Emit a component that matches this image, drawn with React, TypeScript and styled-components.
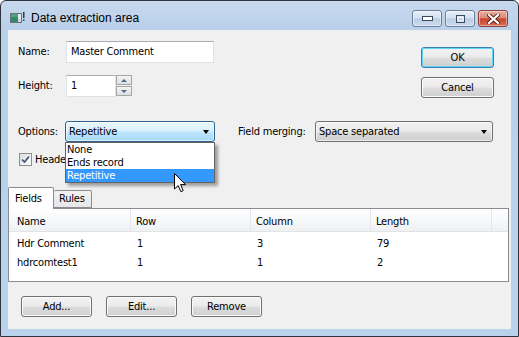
import React from 'react';
import styled, { createGlobalStyle } from 'styled-components';

const UI = `"DejaVu Sans Condensed", "Liberation Sans", sans-serif`;

const Global = createGlobalStyle`
  html, body { margin: 0; padding: 0; background: #ffffff; }
  body { font-family: ${UI}; font-size: 11px; color: #000; letter-spacing: -0.2px; }
  * { box-sizing: border-box; }
`;

const Window = styled.div`
  position: relative;
  width: 519px;
  height: 337px;
  border: 1px solid #2e3340;
  border-radius: 6px 6px 0 0;
  background: linear-gradient(#c6d8ee 0px, #b9d0ea 30px, #bad2ec 100%);
  padding: 0 7px 7px 7px;
  display: flex;
  flex-direction: column;
  overflow: hidden;
`;

const TitleBar = styled.div`
  height: 29px;
  display: flex;
  align-items: flex-start;
  padding: 0 3px 0 2px;
`;

const TitleIcon = styled.svg`
  margin-top: 11px;
  width: 15px;
  height: 11px;
  flex: none;
`;

const TitleText = styled.div`
  margin: 9px 0 0 6px;
  font-family: "Liberation Sans", "Noto Sans", sans-serif;
  font-size: 12px;
  letter-spacing: 0;
  line-height: 16px;
  color: #000;
  flex: 1;
`;

const CapGroup = styled.div`
  display: flex;
  gap: 3px;
  margin-top: 9px;
`;

const CapButton = styled.div<{ $close?: boolean }>`
  width: 30px;
  height: 17px;
  border: 1px solid ${(p) => (p.$close ? '#8d3b33' : '#6c7f97')};
  border-radius: 3px;
  background: ${(p) =>
    p.$close
      ? 'linear-gradient(#eab0a2 0%, #dd8a76 45%, #c9472f 52%, #d56c52 100%)'
      : 'linear-gradient(#e6eef8 0%, #d6e2f0 45%, #bccee4 52%, #cadaee 100%)'};
  box-shadow: inset 0 0 0 1px rgba(255, 255, 255, 0.45);
  display: flex;
  align-items: center;
  justify-content: center;
`;

const Client = styled.div`
  flex: 1;
  background: #f0f0f0;
  display: flex;
  flex-direction: column;
  padding-top: 11px;
`;

const TopSection = styled.div`
  display: flex;
  justify-content: space-between;
  padding: 0 17px 0 10px;
`;

const LeftCol = styled.div`
  display: flex;
  flex-direction: column;
  gap: 13px;
`;

const RightCol = styled.div`
  display: flex;
  flex-direction: column;
  gap: 9px;
  padding-top: 6px;
`;

const FieldRow = styled.div`
  display: flex;
  align-items: center;
  height: 21px;
`;

const Label = styled.div<{ $w: number; $ml?: number }>`
  width: ${(p) => p.$w}px;
  margin-left: ${(p) => p.$ml ?? 0}px;
  flex: none;
  white-space: nowrap;
`;

const TextBox = styled.div<{ $w: number }>`
  width: ${(p) => p.$w}px;
  height: 22px;
  border: 1px solid #e0e2e8;
  border-top-color: #abadb3;
  background: #fff;
  padding-left: 4px;
  line-height: 20px;
  white-space: nowrap;
`;

const Spinner = styled.div`
  display: flex;
  flex-direction: column;
  gap: 1px;
`;

const SpinBtn = styled.div`
  width: 16px;
  height: 10px;
  border: 1px solid #a7a7a7;
  background: linear-gradient(#f4f4f4, #dedede);
  display: flex;
  align-items: center;
  justify-content: center;
`;

const SpinArrow = styled.div<{ $up?: boolean }>`
  width: 0;
  height: 0;
  border-left: 3px solid transparent;
  border-right: 3px solid transparent;
  ${(p) => (p.$up ? 'border-bottom: 3px solid #4d6b8a;' : 'border-top: 3px solid #4d6b8a;')}
`;

const PushButton = styled.div<{ $default?: boolean; $w?: number }>`
  width: ${(p) => p.$w ?? 73}px;
  height: 21px;
  border: 1px solid ${(p) => (p.$default ? '#3c7fb1' : '#707070')};
  border-radius: 3px;
  background: linear-gradient(#f2f2f2 0%, #ebebeb 48%, #dddddd 52%, #cfcfcf 100%);
  box-shadow: inset 0 0 0 1px ${(p) => (p.$default ? '#5fd6f5' : '#fbfbfb')};
  display: flex;
  align-items: center;
  justify-content: center;
  line-height: 19px;
`;

const OptionsRow = styled.div`
  display: flex;
  align-items: center;
  height: 21px;
  margin-top: 23px;
  padding-left: 10px;
`;

const ComboWrap = styled.div`
  position: relative;
`;

const Combo = styled.div<{ $w: number; $open?: boolean }>`
  width: ${(p) => p.$w}px;
  height: 21px;
  border: 1px solid ${(p) => (p.$open ? '#2c628b' : '#707070')};
  border-radius: 3px;
  background: ${(p) =>
    p.$open
      ? 'linear-gradient(#eaf6fd 0%, #d9f0fc 48%, #bee6fd 52%, #a7d9f5 100%)'
      : 'linear-gradient(#f2f2f2 0%, #ebebeb 48%, #dddddd 52%, #cfcfcf 100%)'};
  box-shadow: inset 0 0 0 1px rgba(255, 255, 255, 0.6);
  display: flex;
  align-items: center;
  padding: 0 5px 0 3px;
  white-space: nowrap;
`;

const ComboText = styled.div`
  flex: 1;
  line-height: 19px;
`;

const DropArrow = styled.div`
  width: 0;
  height: 0;
  border-left: 3.5px solid transparent;
  border-right: 3.5px solid transparent;
  border-top: 4px solid #000;
`;

const DropList = styled.div`
  position: absolute;
  top: 21px;
  left: 0;
  width: 150px;
  border: 1px solid #646464;
  background: #fff;
  box-shadow: 3px 3px 3px rgba(0, 0, 0, 0.35);
  z-index: 5;
`;

const DropItem = styled.div<{ $sel?: boolean }>`
  height: 13px;
  line-height: 13px;
  padding-left: 1px;
  background: ${(p) => (p.$sel ? '#3399ff' : '#fff')};
  color: ${(p) => (p.$sel ? '#fff' : '#000')};
  white-space: nowrap;
`;

const CheckRow = styled.div`
  display: flex;
  align-items: center;
  gap: 3px;
  height: 13px;
  margin-top: 11px;
  padding-left: 11px;
`;

const CheckBox = styled.div`
  width: 13px;
  height: 13px;
  border: 1px solid #8f8f8f;
  background: linear-gradient(135deg, #dcdcdc, #ffffff);
  display: flex;
  align-items: center;
  justify-content: center;
`;

const TabArea = styled.div`
  margin-top: 21px;
  padding-right: 2px;
  display: flex;
  flex-direction: column;
`;

const TabStrip = styled.div`
  display: flex;
  align-items: flex-end;
  height: 21px;
  position: relative;
  z-index: 2;
`;

const Tab = styled.div<{ $active?: boolean; $w: number }>`
  width: ${(p) => p.$w}px;
  height: ${(p) => (p.$active ? 22 : 18)}px;
  margin-bottom: ${(p) => (p.$active ? -1 : 0)}px;
  border: 1px solid #898c95;
  border-bottom: ${(p) => (p.$active ? 'none' : '1px solid #898c95')};
  border-left: ${(p) => (p.$active ? '1px solid #898c95' : 'none')};
  border-radius: 2px 2px 0 0;
  background: ${(p) => (p.$active ? '#ffffff' : 'linear-gradient(#f3f3f3, #e6e6e6)')};
  padding-left: ${(p) => (p.$active ? 6 : 5)}px;
  line-height: ${(p) => (p.$active ? 21 : 16)}px;
`;

const ListView = styled.div`
  height: 74px;
  border: 1px solid #898c95;
  background: #fff;
`;

const COLS = '122px 120px 120px 121px 1fr';

const ListHeader = styled.div`
  display: grid;
  grid-template-columns: ${COLS};
  height: 23px;
  border-bottom: 1px solid #e2e3e5;
  background: linear-gradient(#ffffff 0%, #f6f7f8 60%, #eef0f2 100%);
`;

const HeadCell = styled.div`
  padding: 3px 0 0 5px;
  line-height: 19px;
  border-right: 1px solid #e3e5e8;
  &:first-child { padding-left: 8px; }
  &:last-child { border-right: none; }
`;

const Rows = styled.div`
  padding-top: 2px;
`;

const Row = styled.div`
  display: grid;
  grid-template-columns: ${COLS};
  height: 19px;
  line-height: 19px;
`;

const Cell = styled.div`
  padding-left: 6px;
  white-space: nowrap;
  &:first-child { padding-left: 8px; }
`;

const ButtonRow = styled.div`
  display: flex;
  gap: 14px;
  margin-top: 14px;
  padding-left: 13px;
`;

const Cursor = styled.svg`
  position: absolute;
  left: 173px;
  top: 172px;
  width: 13px;
  height: 20px;
  z-index: 10;
`;

const columns = ['Name', 'Row', 'Column', 'Length', ''];
const data = [
  ['Hdr Comment', '1', '3', '79', ''],
  ['hdrcomtest1', '1', '1', '2', ''],
];

export default function App() {
  return (
    <>
      <Global />
      <Window>
        <TitleBar>
          <TitleIcon viewBox="0 0 15 11">
            <rect x="0.5" y="1.5" width="11" height="9" fill="#e8e8e8" stroke="#6f6f6f" />
            <rect x="1" y="2" width="7" height="8" fill="#2f8a6e" />
            <rect x="1" y="2" width="7" height="3" fill="#4aa486" />
            <rect x="8" y="7" width="3" height="3" fill="#cfd4d8" />
            <rect x="13" y="0" width="1.5" height="6" fill="#2b3a55" />
            <rect x="13" y="7.5" width="1.5" height="1.5" fill="#2b3a55" />
          </TitleIcon>
          <TitleText>Data extraction area</TitleText>
          <CapGroup>
            <CapButton>
              <svg width="11" height="5" viewBox="0 0 11 5">
                <rect x="0.5" y="0.5" width="10" height="4" fill="#fff" stroke="#3a4a60" />
              </svg>
            </CapButton>
            <CapButton>
              <svg width="9" height="8" viewBox="0 0 9 8">
                <rect x="0.5" y="0.5" width="8" height="7" fill="none" stroke="#3a4a60" />
                <rect x="2" y="2.5" width="5" height="3.5" fill="none" stroke="#fff" />
              </svg>
            </CapButton>
            <CapButton $close>
              <svg width="13" height="10" viewBox="0 0 13 10">
                <path d="M2 1 L11 9 M11 1 L2 9" stroke="#5a1f18" strokeWidth="4" strokeLinecap="square" />
                <path d="M2 1 L11 9 M11 1 L2 9" stroke="#ffffff" strokeWidth="2.2" strokeLinecap="square" />
              </svg>
            </CapButton>
          </CapGroup>
        </TitleBar>
        <Client>
          <TopSection>
            <LeftCol>
              <FieldRow>
                <Label $w={48}>Name:</Label>
                <TextBox $w={148}>Master Comment</TextBox>
              </FieldRow>
              <FieldRow>
                <Label $w={48}>Height:</Label>
                <TextBox $w={50}>1</TextBox>
                <Spinner>
                  <SpinBtn>
                    <SpinArrow $up />
                  </SpinBtn>
                  <SpinBtn>
                    <SpinArrow />
                  </SpinBtn>
                </Spinner>
              </FieldRow>
            </LeftCol>
            <RightCol>
              <PushButton $default>OK</PushButton>
              <PushButton>Cancel</PushButton>
            </RightCol>
          </TopSection>

          <OptionsRow>
            <Label $w={47}>Options:</Label>
            <ComboWrap>
              <Combo $w={150} $open>
                <ComboText>Repetitive</ComboText>
                <DropArrow />
              </Combo>
              <DropList>
                <DropItem>None</DropItem>
                <DropItem>Ends record</DropItem>
                <DropItem $sel>Repetitive</DropItem>
              </DropList>
            </ComboWrap>
            <Label $w={77} $ml={23}>Field merging:</Label>
            <Combo $w={178}>
              <ComboText>Space separated</ComboText>
              <DropArrow />
            </Combo>
          </OptionsRow>

          <CheckRow>
            <CheckBox>
              <svg width="9" height="9" viewBox="0 0 9 9">
                <path d="M1 4.5 L3.5 7 L8 1.5" fill="none" stroke="#3b4f7a" strokeWidth="1.6" />
              </svg>
            </CheckBox>
            <span>Header</span>
          </CheckRow>

          <TabArea>
            <TabStrip>
              <Tab $active $w={46}>Fields</Tab>
              <Tab $w={38}>Rules</Tab>
            </TabStrip>
            <ListView>
              <ListHeader>
                {columns.map((c, i) => (
                  <HeadCell key={i}>{c}</HeadCell>
                ))}
              </ListHeader>
              <Rows>
                {data.map((r, i) => (
                  <Row key={i}>
                    {r.map((c, j) => (
                      <Cell key={j}>{c}</Cell>
                    ))}
                  </Row>
                ))}
              </Rows>
            </ListView>
          </TabArea>

          <ButtonRow>
            <PushButton $w={71}>Add...</PushButton>
            <PushButton $w={71}>Edit...</PushButton>
            <PushButton $w={71}>Remove</PushButton>
          </ButtonRow>
        </Client>
        <Cursor viewBox="0 0 13 20">
          <path
            d="M0.5 0.5 L0.5 16 L4.2 12.6 L6.8 18.6 L9.2 17.6 L6.6 11.6 L11.5 11.6 Z"
            fill="#fff"
            stroke="#000"
            strokeWidth="1"
            strokeLinejoin="round"
          />
        </Cursor>
      </Window>
    </>
  );
}
